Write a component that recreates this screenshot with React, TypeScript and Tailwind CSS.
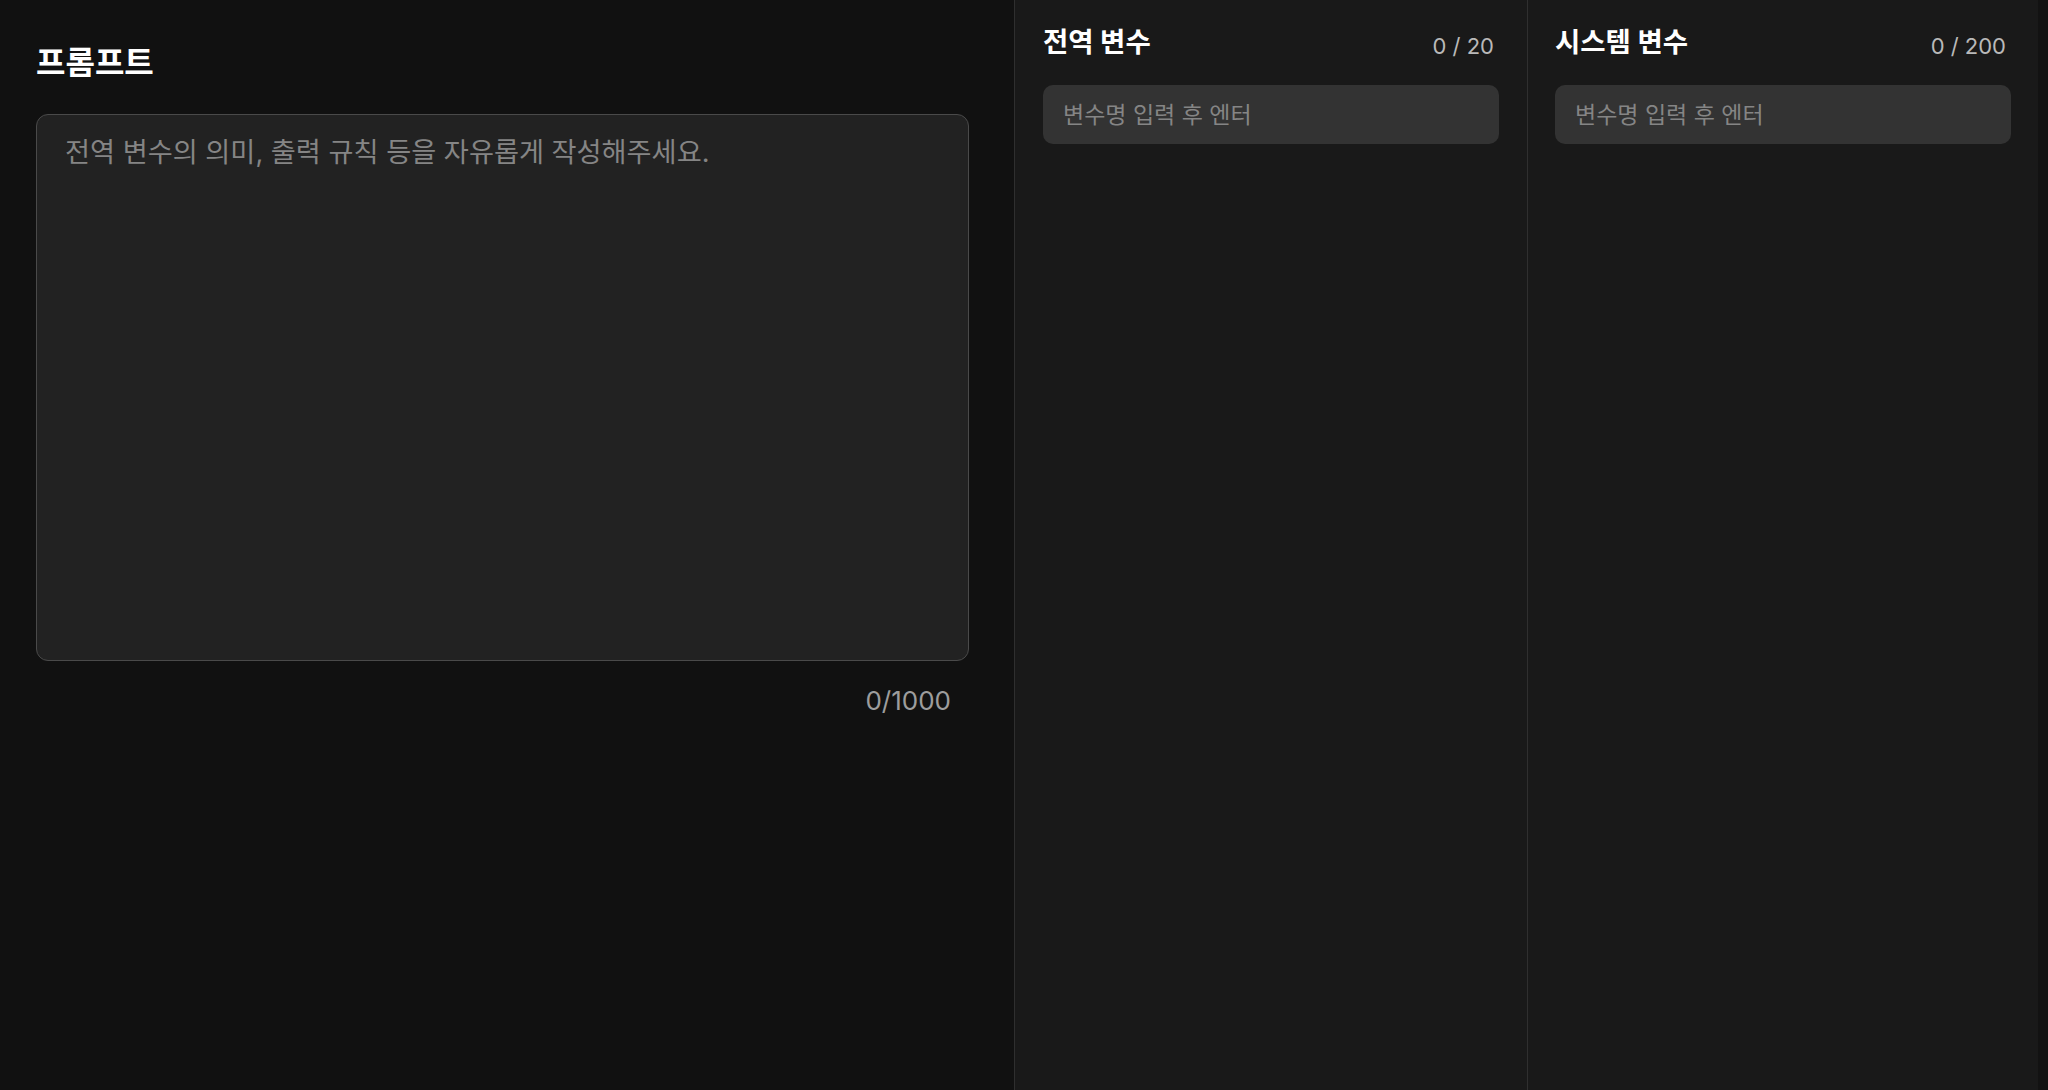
import React from "react";

const font = { fontFamily: 'Inter, "Noto Sans CJK KR", "Noto Sans", sans-serif' };

function VarPanel({ title, count, className }: { title: string; count: string; className: string }) {
  return (
    <div className={`flex flex-col bg-[#191919] pt-[22px] ${className}`}>
      <div className="flex items-baseline justify-between pr-[5px]">
        <h2 className="text-[27.5px] font-bold leading-[40px] text-white">{title}</h2>
        <span className="relative top-[2px] text-[22px] leading-[40px] text-[#b9b9b9]">{count}</span>
      </div>
      <input
        type="text"
        placeholder="변수명 입력 후 엔터"
        className="mt-[21px] h-[59px] w-full rounded-[10px] bg-[#333333] px-5 text-[23px] text-white outline-none placeholder:text-[#858585]"
      />
    </div>
  );
}

export default function App() {
  return (
    <div className="flex h-screen w-full overflow-hidden bg-[#111111]" style={font}>
      <div className="flex w-[1014px] shrink-0 flex-col bg-[#111111] pl-9 pt-[43px]">
        <h1 className="text-[32px] font-bold leading-[40px] text-white">프롬프트</h1>
        <textarea
          placeholder="전역 변수의 의미, 출력 규칙 등을 자유롭게 작성해주세요."
          className="mt-[31px] h-[547px] w-[933px] resize-none rounded-xl border border-[#4a4a4a] bg-[#222222] px-7 pt-[18px] text-[27.2px] leading-[40px] text-white outline-none placeholder:text-[#858585]"
        />
        <div className="mt-[20px] w-[933px] pr-[18px] text-right text-[26px] leading-[40px] text-[#9d9d9d]">0/1000</div>
      </div>
      <VarPanel title="전역 변수" count="0 / 20" className="w-[514px] shrink-0 border-x border-[#2f2f2f] px-7" />
      <VarPanel title="시스템 변수" count="0 / 200" className="w-[510px] shrink-0 pl-[27px] pr-[27px]" />
      <div className="flex-1 bg-[#121212]" />
    </div>
  );
}
